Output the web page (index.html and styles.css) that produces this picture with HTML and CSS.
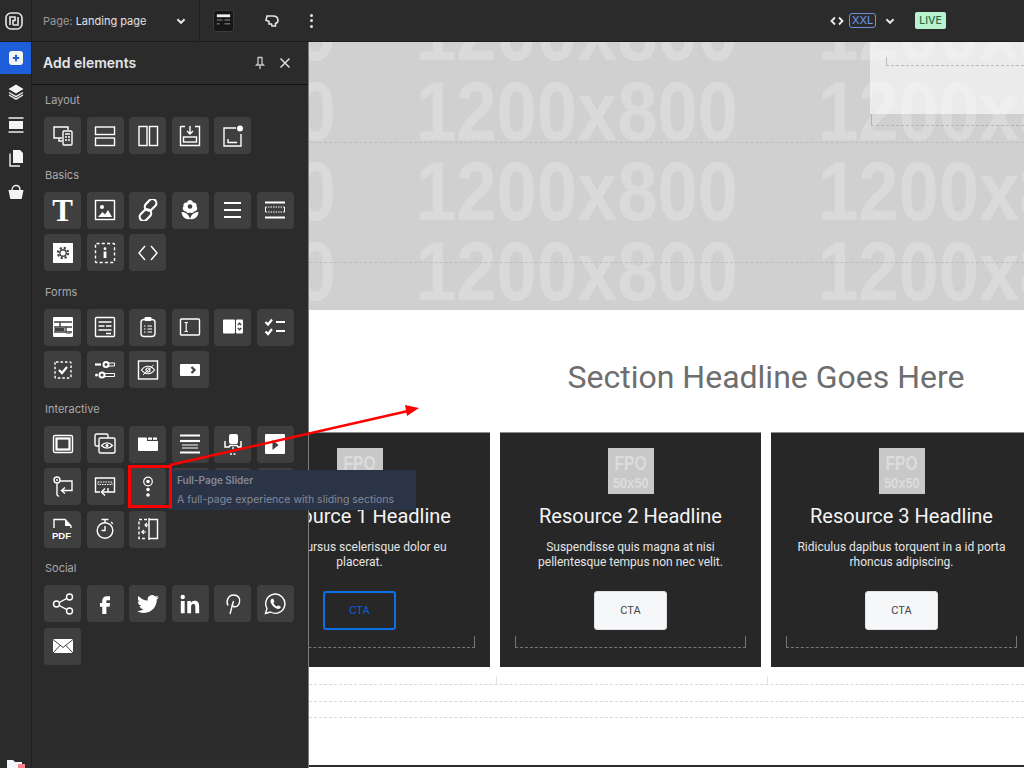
FILE: index.html
```html
<!DOCTYPE html>
<html lang="en">

<head>
    <meta charset="UTF-8">
    <meta name="viewport" content="width=device-width, initial-scale=1.0">
    <title>Add elements</title>
    <link rel="stylesheet" href="styles.css">
</head>

<body>
    <div class="app">
        <!-- top bar -->
        <header class="topbar">
            <div class="logoCell">
                <svg class="logo" viewBox="0 0 20 20">
                    <rect x="2" y="2" width="16" height="16" rx="5" />
                    <path d="M6 14V6h5v3.500H9V14M14 6v8H9" />
                </svg>
            </div>
            <div class="pageCell">
                <span class="pageName"><em>Page:</em> Landing page</span>
                <svg class="chev" viewBox="0 0 10 10"><path d="M2 3.500l3 3 3-3" /></svg>
            </div>
            <div class="tools">
                <div class="layoutBtn">
                    <svg viewBox="0 0 20 20">
                        <rect class="w" x="3" y="3" width="14" height="3" />
                        <path d="M3 9h6M11 9h6M3 13h3M11 13h6" />
                    </svg>
                </div>
                <svg class="toolIcon" viewBox="0 0 16 16">
                    <path d="M3 3h6c3 0 5 1.500 5 4.500 0 1.500-1 2.500-2.500 3V13H8l-.5-2H5V8.500L2 7.200z" />
                </svg>
                <div class="kebab"><i></i><i></i><i></i></div>
            </div>
            <div class="viewCtl">
                <svg class="codeIcon" viewBox="0 0 14 10"><path d="M5 1.500L1.500 5 5 8.500M9 1.500L12.500 5 9 8.500" /></svg>
                <span class="xxl">XXL</span>
                <svg class="chev" viewBox="0 0 10 10"><path d="M2 3.500l3 3 3-3" /></svg>
                <span class="live">LIVE</span>
            </div>
        </header>

        <div class="main">
            <!-- left rail -->
            <nav class="rail">
                <div class="railItem on">
                    <svg viewBox="0 0 18 18"><rect class="f" x="2" y="2" width="14" height="14" rx="3" /><path class="d" d="M9 5.800v6.400M5.800 9h6.400" /></svg>
                </div>
                <div class="railItem">
                    <svg viewBox="0 0 18 18"><path class="f" d="M9 1.500l7.500 4.500L9 10.500 1.500 6z" /><path d="M2 9.500l7 4.200 7-4.200" /><path d="M2 12l7 4.200 7-4.200" /></svg>
                </div>
                <div class="railItem">
                    <svg viewBox="0 0 18 18"><rect class="f" x="2" y="5" width="14" height="8" /><path d="M1.500 2h15M1.500 16h15" /></svg>
                </div>
                <div class="railItem">
                    <svg viewBox="0 0 18 18"><path class="f" d="M6 1h7l3 3v10H6z" /><path d="M3 4.500V17h10" /></svg>
                </div>
                <div class="railItem">
                    <svg viewBox="0 0 18 18"><path class="f" d="M1.500 7h15l-1.800 9H3.300z" /><path d="M5 7c0-6 8-6 8 0" /></svg>
                </div>
                <div class="railFoot">
                    <svg viewBox="0 0 20 12"><path class="f" d="M1 0h6l2 2h7v12H1z" /><rect class="pink" x="12" y="4" width="7" height="8" /></svg>
                </div>
            </nav>

            <!-- elements panel -->
            <aside class="panel">
                <div class="panelHead">
                    <h2>Add elements</h2>
                    <svg class="pin" viewBox="0 0 14 14"><path d="M4.500 1.500h5M5 1.500v6L3.500 9h7L9 7.500v-6M7 9v4" /></svg>
                    <svg class="close" viewBox="0 0 14 14"><path d="M2.500 2.500l9 9M11.500 2.500l-9 9" /></svg>
                </div>

                <section class="group">
                    <h3>Layout</h3>
                    <div class="tiles">
                        <div class="tile"><svg class="ic" viewBox="0 0 22 22"><path d="M10 13H2V2h14v3" /><path d="M7 13v3h3" /><rect x="11" y="6" width="9" height="14" rx="1" /><path d="M13 9h5M13 12h2M16 12h2M13 15h2M16 15h2" /></svg></div>
                        <div class="tile"><svg class="ic" viewBox="0 0 22 22"><rect x="1.500" y="2" width="19" height="7.500" /><rect x="1.500" y="13" width="19" height="7.500" /></svg></div>
                        <div class="tile"><svg class="ic" viewBox="0 0 22 22"><rect x="2" y="1.500" width="8" height="19" /><rect x="12.500" y="1.500" width="8" height="19" /></svg></div>
                        <div class="tile"><svg class="ic" viewBox="0 0 22 22"><path d="M6 1.500H2a.5.5 0 0 0-.5.5v18.500h19V1.500H16" /><path d="M11 1v7M8 6l3 3 3-3" /><rect x="4.500" y="12" width="13" height="5" /></svg></div>
                        <div class="tile"><svg class="ic" viewBox="0 0 22 22"><path d="M14 3H2v18h17V9" /><path d="M6 14v3.500h9" /><circle class="f" cx="18" cy="3.500" r="3" /></svg></div>
                    </div>
                </section>

                <section class="group">
                    <h3>Basics</h3>
                    <div class="tiles">
                        <div class="tile"><span class="serifT">T</span></div>
                        <div class="tile"><svg class="ic" viewBox="0 0 22 22"><rect x="1.500" y="1.500" width="19" height="19" /><circle class="f" cx="8" cy="8" r="2" /><path class="f" d="M4 18l4.500-5 2.500 2.500 3-4.500 4 7z" /></svg></div>
                        <div class="tile"><svg class="ic thick" viewBox="0 0 22 22"><rect x="11" y="-2" width="8" height="13" rx="4" transform="rotate(45 15 4.500) translate(0 2)" /><rect x="3" y="11" width="8" height="13" rx="4" transform="rotate(45 7 17.500) translate(0 -2)" /></svg></div>
                        <div class="tile"><svg class="ic" viewBox="0 0 22 22"><path class="f" d="M11 1a3 3 0 0 1 3 2.500 3 3 0 0 1 3.500 4A3 3 0 0 1 15 12.500a3 3 0 0 1-4 1 3 3 0 0 1-4-1 3 3 0 0 1-2.500-5A3 3 0 0 1 8 3.500 3 3 0 0 1 11 1z" /><circle class="n" cx="11" cy="7.500" r="2.300" /><path class="f" d="M2.500 13c4 0 7.500 2.500 8.500 7-4.500 1-8-2-8.500-7zM19.500 13c-4 0-7.500 2.500-8.500 7 4.500 1 8-2 8.500-7z" /></svg></div>
                        <div class="tile"><svg class="ic bold" viewBox="0 0 22 22"><path d="M2 4h17M2 11h17M2 18h17" /></svg></div>
                        <div class="tile"><svg class="ic" viewBox="0 0 22 22"><path class="bar" d="M1 3.500h20M1 18.500h20" /><path stroke-dasharray="1.500 1" d="M1.500 8h19M1.500 13h19" stroke-width="1" /><path d="M1.500 8v5M20.500 8v5" stroke-width="1" /></svg></div>
                        <div class="tile"><svg class="ic" viewBox="0 0 22 22"><rect class="f" x="1" y="1" width="20" height="20" /><circle class="dk" cx="11" cy="11" r="3.200" /><circle class="dkd" cx="11" cy="11" r="5.200" /></svg></div>
                        <div class="tile"><svg class="ic" viewBox="0 0 22 22"><rect x="1.500" y="1.500" width="19" height="19" rx="1" stroke-dasharray="3 2.300" /><circle class="f" cx="11" cy="6.700" r="1.400" /><rect class="f" x="9.600" y="9.500" width="2.800" height="6.500" /></svg></div>
                        <div class="tile"><svg class="ic" viewBox="0 0 22 22"><path d="M8 4l-6 7 6 7M14 4l6 7-6 7" /></svg></div>
                    </div>
                </section>

                <section class="group">
                    <h3>Forms</h3>
                    <div class="tiles">
                        <div class="tile"><svg class="ic" viewBox="0 0 22 22"><rect class="f" x="1" y="1" width="20" height="20" rx="1" /><path class="dk" d="M2 6h18M2 11h18M2 16h18M8 6v5M14 11v5" /><rect class="n" x="2.500" y="12" width="10" height="3" /><rect class="n" x="14" y="17.200" width="5" height=".5" /></svg></div>
                        <div class="tile"><svg class="ic" viewBox="0 0 22 22"><rect x="1.500" y="1.500" width="19" height="19" rx="1" /><path d="M4.500 6h13M4.500 10h6M12 10h5.500M4.500 14h13M12 17.500h5" /></svg></div>
                        <div class="tile"><svg class="ic" viewBox="0 0 22 22"><rect x="4" y="3.500" width="14" height="17" rx="3" /><rect class="f" x="7.500" y="1" width="7" height="4" rx="1" /><path d="M7 10h1.500M10.500 10H15M7 13h1.500M10.500 13H15M7 16h1.500M10.500 16H15" stroke-width="1.200" /></svg></div>
                        <div class="tile"><svg class="ic" viewBox="0 0 22 22"><rect x="1.500" y="3" width="19" height="16" rx="1" /><path d="M5.500 6.500h3.500M5.500 15.500h3.500M7.200 6.500v9" stroke-width="1.200" /></svg></div>
                        <div class="tile"><svg class="ic" viewBox="0 0 22 22"><rect class="f" x="1" y="3.500" width="12" height="14" rx="1" /><rect class="f" x="14" y="3.500" width="7" height="14" rx="1" /><path class="dk" d="M15.800 9l1.700-1.800L19.200 9M15.800 12l1.700 1.800 1.700-1.800" /></svg></div>
                        <div class="tile"><svg class="ic bold" viewBox="0 0 22 22"><path d="M1.500 6l2.500 2.500L8 3.500M1.500 15.500l2.500 2.500 4-5M12 6h9M12 15h9" /></svg></div>
                        <div class="tile"><svg class="ic" viewBox="0 0 22 22"><rect x="3" y="3" width="16" height="16" rx="1" stroke-dasharray="2.500 2" /><path class="th" d="M7 11l3 3 5-6" /></svg></div>
                        <div class="tile"><svg class="ic" viewBox="0 0 22 22"><path class="th" d="M1 5.500h6" /><circle cx="12" cy="5.500" r="2.500" stroke-width="2" /><path d="M15 4h5.500v3H15" stroke-width="1" /><circle class="f" cx="2.500" cy="16" r="1.500" /><circle cx="8" cy="16" r="2.500" stroke-width="2" /><path d="M11 14.500h9.500v3H11" stroke-width="1" /></svg></div>
                        <div class="tile"><svg class="ic" viewBox="0 0 22 22"><rect x="1.500" y="2" width="19" height="18" /><path d="M4.500 11c3.500-5 9.500-5 13 0-3.500 5-9.500 5-13 0z" stroke-width="1.200" /><circle cx="11" cy="11" r="2" stroke-width="1.200" /><path d="M6 16L16.500 6" stroke-width="1" /></svg></div>
                        <div class="tile"><svg class="ic" viewBox="0 0 22 22"><rect class="f" x="1" y="5" width="20" height="12" rx="1" /><path class="dk th" d="M12.500 8l3 3-3 3" /></svg></div>
                    </div>
                </section>

                <section class="group">
                    <h3>Interactive</h3>
                    <div class="tiles">
                        <div class="tile"><svg class="ic" viewBox="0 0 22 22"><rect x="1.500" y="2.500" width="19" height="17" rx="1.500" /><rect class="f2" x="4.500" y="5.500" width="13" height="11" /></svg></div>
                        <div class="tile"><svg class="ic" viewBox="0 0 22 22"><rect x="1" y="1" width="13" height="12" rx="1.500" /><rect class="n2" x="5" y="5" width="16" height="15" rx="1.500" /><path d="M7.500 12.500c3-3.500 8-3.500 11 0-3 3.500-8 3.500-11 0z" stroke-width="1.200" /><circle class="f" cx="13" cy="12.500" r="1.500" /></svg></div>
                        <div class="tile"><svg class="ic" viewBox="0 0 22 22"><path class="f" d="M1 5h9V8h11v9a1 1 0 0 1-1 1H2a1 1 0 0 1-1-1z" /><rect class="f" x="11" y="4.500" width="4" height="2.300" /><rect class="f" x="16" y="4.500" width="4" height="2.300" /><rect class="f" x="1" y="4.500" width="8.500" height="4" /></svg></div>
                        <div class="tile"><svg class="ic" viewBox="0 0 22 22"><path class="bar" d="M1 2.500h20M1 19.500h20" /><path class="bar" d="M1 8h20" /><path d="M3 12h16M3 15h16" stroke-width="1" /></svg></div>
                        <div class="tile"><svg class="ic" viewBox="0 0 22 22"><rect class="f" x="7" y="1" width="9" height="10" rx="2" /><path d="M3 8v6h4l1-1.500h7l1 1.500h3V8" stroke-width="1.500" /><path d="M11 14v5M8 21h6" stroke-dasharray="2 1.500" /></svg></div>
                        <div class="tile"><svg class="ic" viewBox="0 0 22 22"><rect class="f" x="1" y="1" width="20" height="20" rx="1" /><path class="n" d="M8.500 7l6 5-6 5z" /></svg></div>
                        <div class="tile"><svg class="ic" viewBox="0 0 22 22"><circle cx="5" cy="4" r="3" /><circle class="f" cx="5" cy="4" r="1" /><path d="M8 5h12v9.500H10" /><path d="M13 11.500l-3.500 3 3.500 3" /><path d="M5 7.500V19l2 1.500" /></svg></div>
                        <div class="tile"><svg class="ic" viewBox="0 0 22 22"><path d="M6 16H1.500V2h19v14H14" /><path d="M4 6h14v2.500H4z" stroke-dasharray="1.500 1" stroke-width="1" /><path d="M14 12v4H8" /><path d="M11 12.500L7.500 16l3.500 3.500" /></svg></div>
                        <div class="tile"><svg class="ic" viewBox="0 0 22 22"><circle cx="11" cy="5.500" r="4.300" stroke-width="1.200" /><circle class="f" cx="11" cy="5.500" r="1.800" /><circle class="f" cx="11" cy="13.500" r="1.800" /><circle class="f" cx="11" cy="19" r="1.800" /></svg></div>
                        <div class="tile"></div>
                        <div class="tile"></div>
                        <div class="tile"></div>
                        <div class="tile"><svg class="ic" viewBox="0 0 22 22"><path d="M2 10V1.500h11l6 6.500v2" /><path class="f" d="M13 2l6 6h-6z" /><text class="pdf" x="0" y="20.500">PDF</text></svg></div>
                        <div class="tile"><svg class="ic" viewBox="0 0 22 22"><circle cx="11" cy="12.500" r="7.800" /><path d="M7.500 1.500h7M11 1.500v3M17 4l1.800 1.800" /><path d="M11 8v4.500H7.500" /></svg></div>
                        <div class="tile"><svg class="ic" viewBox="0 0 22 22"><path d="M10 1.500H2v19h8" stroke-dasharray="3 2" /><path d="M12 1.500h8.500v19H12zM12 0v22" /><path d="M12 7H8M10 5l-2 2 2 2M4 14h5M7 12l-2 2 2 2" stroke-width="1.200" /></svg></div>
                    </div>
                </section>

                <section class="group">
                    <h3>Social</h3>
                    <div class="tiles">
                        <div class="tile"><svg class="ic" viewBox="0 0 22 22"><circle cx="4.500" cy="11" r="3" /><circle cx="17.500" cy="4" r="3" /><circle cx="17.500" cy="18" r="3" /><path d="M7.200 9.500l7.700-4.200M7.200 12.500l7.700 4.200" /></svg></div>
                        <div class="tile"><svg class="ic" viewBox="0 0 24 24"><path class="f" d="M14 8h3.500V3.500H14c-3 0-5 2-5 4.800V11H6.500v4H9v8h4.500v-8H17l.5-4h-4V8.800c0-.5.100-.8.500-.8z" /></svg></div>
                        <div class="tile"><svg class="ic" viewBox="0 0 24 24"><path class="f" d="M23.950 4.570a10 10 0 0 1-2.820.77 4.960 4.960 0 0 0 2.160-2.720c-.95.550-2 .960-3.120 1.190a4.920 4.920 0 0 0-8.390 4.480C7.690 8.090 4.070 6.130 1.640 3.160a4.820 4.820 0 0 0-.67 2.480c0 1.710.87 3.210 2.190 4.100a4.900 4.900 0 0 1-2.230-.61v.06c0 2.390 1.700 4.380 3.950 4.830a5 5 0 0 1-2.210.08 4.940 4.940 0 0 0 4.600 3.420A9.870 9.870 0 0 1 0 19.540a14 14 0 0 0 7.560 2.210c9.050 0 14-7.500 14-13.980 0-.210 0-.420-.020-.630a9.940 9.940 0 0 0 2.460-2.550z" /></svg></div>
                        <div class="tile"><svg class="ic" viewBox="0 0 24 24"><path class="f" d="M22 22h-4.200v-6.500c0-1.600 0-3.500-2.100-3.500s-2.500 1.600-2.500 3.400V22H9V8.800h4v1.800h.1c.6-1.100 1.900-2.100 3.900-2.100 4.200 0 5 2.700 5 6.300zM4.100 6.800a2.400 2.400 0 1 1 0-4.800 2.400 2.400 0 0 1 0 4.800zM6.200 22H2V8.800h4.200z" /></svg></div>
                        <div class="tile"><svg class="ic" viewBox="0 0 22 22"><path d="M8 21l3.500-13" /><path d="M6 12.500C3.500 8 6.500 2 11.500 2c4.500 0 7 3 6 7.500-.8 3.500-3.500 5-6 4-1-.4-1.500-1-1.800-1.800" /></svg></div>
                        <div class="tile"><svg class="ic" viewBox="0 0 22 22"><path d="M1.500 20.500l1.500-5A9.600 9.600 0 1 1 6.500 19z" /><path class="f" d="M7.800 5.800c-1.500 1-1.800 3-.5 5 1.300 2.300 3.500 4.300 5.800 5 1.800.5 3.300-.3 3.800-1.800l-2.700-1.800-1.300 1.200c-1.500-.6-3-2.200-3.500-3.500l1-1.300-1.200-2.800z" /></svg></div>
                        <div class="tile"><svg class="ic" viewBox="0 0 22 22"><rect class="f" x="1" y="4" width="20" height="14" rx="1" /><path class="dk mail" d="M1 4.500l10 8 10-8M1 18l7.500-8M21 18l-7.500-8" /></svg></div>
                    </div>
                </section>
            </aside>

            <!-- page canvas -->
            <main class="stage">
                <div class="hero">
                    <svg class="heroArt" viewBox="0 0 715 268">
                        <g class="heroRow">
                            <text x="-295" y="18" textLength="322" lengthAdjust="spacingAndGlyphs">1200x800</text>
                            <text x="107" y="18" textLength="322" lengthAdjust="spacingAndGlyphs">1200x800</text>
                            <text x="509" y="18" textLength="322" lengthAdjust="spacingAndGlyphs">1200x800</text>
                            <text x="-295" y="98" textLength="322" lengthAdjust="spacingAndGlyphs">1200x800</text>
                            <text x="107" y="98" textLength="322" lengthAdjust="spacingAndGlyphs">1200x800</text>
                            <text x="509" y="98" textLength="322" lengthAdjust="spacingAndGlyphs">1200x800</text>
                            <text x="-295" y="178" textLength="322" lengthAdjust="spacingAndGlyphs">1200x800</text>
                            <text x="107" y="178" textLength="322" lengthAdjust="spacingAndGlyphs">1200x800</text>
                            <text x="509" y="178" textLength="322" lengthAdjust="spacingAndGlyphs">1200x800</text>
                            <text x="-295" y="258" textLength="322" lengthAdjust="spacingAndGlyphs">1200x800</text>
                            <text x="107" y="258" textLength="322" lengthAdjust="spacingAndGlyphs">1200x800</text>
                            <text x="509" y="258" textLength="322" lengthAdjust="spacingAndGlyphs">1200x800</text>
                        </g>
                    </svg>
                    <i class="heroDash first"></i>
                    <i class="heroDash second"></i>
                    <div class="ghostBox"><i class="ghostLine"></i></div>
                    <i class="ghostFoot"></i>
                </div>

                <div class="pageWrap">
                    <h1>Section Headline Goes Here</h1>
                    <div class="cards">
                        <article class="card">
                            <div class="fpo"><b>FPO</b><b class="small">50x50</b></div>
                            <h4>Resource 1 Headline</h4>
                            <p>Ante cursus scelerisque dolor eu placerat.</p>
                            <a href="#" class="cta active">CTA</a>
                            <i class="bracket"></i>
                        </article>
                        <article class="card">
                            <div class="fpo"><b>FPO</b><b class="small">50x50</b></div>
                            <h4>Resource 2 Headline</h4>
                            <p>Suspendisse quis magna at nisi pellentesque tempus non nec velit.</p>
                            <a href="#" class="cta">CTA</a>
                            <i class="bracket"></i>
                        </article>
                        <article class="card">
                            <div class="fpo"><b>FPO</b><b class="small">50x50</b></div>
                            <h4>Resource 3 Headline</h4>
                            <p>Ridiculus dapibus torquent in a id porta rhoncus adipiscing.</p>
                            <a href="#" class="cta">CTA</a>
                            <i class="bracket"></i>
                        </article>
                    </div>
                </div>

                <div class="guides">
                    <div class="guideTicks"><i></i><i></i></div>
                    <div class="guide"></div>
                    <div class="guide"></div>
                    <div class="guide"></div>
                </div>
            </main>
        </div>

        <!-- tooltip + red annotation, over everything -->
        <div class="tooltip">
            <strong>Full-Page Slider</strong>
            <span>A full-page experience with sliding sections</span>
        </div>
        <svg class="annot" viewBox="0 0 1024 768">
            <rect x="129.500" y="466.500" width="41" height="40" />
            <path d="M170 465L408 411" />
            <path class="head" d="M419 408L405 405 407 416z" />
        </svg>
    </div>
</body>

</html>
```

FILE: styles.css
```css
/* reset */
* {
    margin: 0;
    box-sizing: border-box;
}

body {
    background: #fff;
    font-family: "Inter", "Liberation Sans", sans-serif;
    color: #ddd;
    overflow: hidden;
}

i {
    display: block;
}

.app {
    position: relative;
    display: flex;
    flex-direction: column;
    width: 1024px;
    height: 768px;
    overflow: hidden;
}

/* top bar */
.topbar {
    display: flex;
    align-items: center;
    flex: 0 0 42px;
    background: #2b2b2b;
    border-bottom: 1px solid #1c1c1c;
}

.logoCell {
    display: flex;
    align-items: center;
    justify-content: center;
    width: 32px;
    height: 41px;
    border-right: 1px solid #1f1f1f;
}

.logo {
    width: 20px;
    height: 20px;
    margin-left: -3px;
    fill: none;
    stroke: #e6e6e6;
    stroke-width: 1.6;
}

.pageCell {
    display: flex;
    align-items: center;
    width: 168px;
    height: 41px;
    padding: 0 12px 0 11px;
    border-right: 1px solid #1f1f1f;
}

.pageName {
    flex: 1;
    font-size: 11px;
    color: #e2e2e2;
}

.pageName em {
    font-style: normal;
    color: #9a9a9a;
}

.chev {
    width: 12px;
    height: 12px;
    fill: none;
    stroke: #e6e6e6;
    stroke-width: 1.6;
}

.tools {
    display: flex;
    align-items: center;
    padding-left: 13px;
}

.layoutBtn {
    width: 21px;
    height: 22px;
    background: #161616;
    border: 1px solid #3a3a3a;
    border-radius: 3px;
}

.layoutBtn svg {
    display: block;
    width: 19px;
    height: 20px;
    fill: none;
    stroke: #666;
    stroke-width: 1.600;
}

.layoutBtn .w {
    fill: #eee;
    stroke: none;
}

.toolIcon {
    width: 16px;
    height: 16px;
    margin-left: 30px;
    fill: none;
    stroke: #e6e6e6;
    stroke-width: 1.600;
}

.kebab {
    display: flex;
    flex-direction: column;
    gap: 2.500px;
    margin-left: 30px;
}

.kebab i {
    width: 3px;
    height: 3px;
    border-radius: 50%;
    background: #e6e6e6;
}

.viewCtl {
    display: flex;
    align-items: center;
    margin-left: auto;
    padding-right: 78px;
}

.codeIcon {
    width: 14px;
    height: 10px;
    fill: none;
    stroke: #eee;
    stroke-width: 1.800;
}

.xxl {
    width: 27px;
    height: 15px;
    margin-left: 5px;
    border: 1px solid #6d8fdc;
    border-radius: 3px;
    font-size: 11px;
    line-height: 13px;
    text-align: center;
    color: #6f97f0;
}

.viewCtl .chev {
    margin-left: 8px;
}

.live {
    width: 31px;
    height: 17px;
    margin-left: 19px;
    background: #b8f2cf;
    border-radius: 2px;
    font-size: 10.500px;
    font-weight: 500;
    line-height: 17px;
    text-align: center;
    color: #1f6b4b;
}

.main {
    display: flex;
    flex: 1;
    min-height: 0;
}

/* rail */
.rail {
    display: flex;
    flex-direction: column;
    flex: 0 0 32px;
    background: #2b2b2b;
    border-right: 1px solid #1f1f1f;
}

.railItem {
    display: flex;
    align-items: center;
    justify-content: center;
    height: 33.300px;
}

.railItem.on {
    height: 32px;
    margin-bottom: 1px;
    background: #1e5edb;
}

.railItem svg {
    width: 18px;
    height: 18px;
    fill: none;
    stroke: #eee;
    stroke-width: 1.400;
}

.railItem .f {
    fill: #f4f4f4;
    stroke: none;
}

.railItem .d {
    stroke: #1e5edb;
    stroke-width: 2;
}

.railFoot {
    margin-top: auto;
    height: 8px;
    overflow: hidden;
    padding-left: 6px;
}

.railFoot svg {
    display: block;
    width: 20px;
    height: 12px;
}

.railFoot .f {
    fill: #f3f6fb;
}

.railFoot .pink {
    fill: #ff8088;
}

/* panel */
.panel {
    flex: 0 0 277px;
    background: #2b2b2b;
    border-right: 1px solid #7d7d7d;
}

.panelHead {
    display: flex;
    align-items: center;
    height: 43px;
    padding: 0 16px 1px 11px;
    border-bottom: 1px solid #141414;
}

.panelHead h2 {
    flex: 1;
    font-size: 14px;
    font-weight: 600;
    color: #e4e6ea;
}

.pin,
.close {
    width: 14px;
    height: 14px;
    fill: none;
    stroke: #c9c9c9;
    stroke-width: 1.300;
}

.close {
    margin-left: 11px;
    stroke: #ddd;
    stroke-width: 1.500;
}

.group {
    margin: 0 0 12.500px 12px;
}

.group:first-of-type {
    margin-top: 7px;
}

.group h3 {
    height: 16px;
    margin: 0 0 9px 1px;
    font-size: 11px;
    font-weight: 400;
    line-height: 16px;
    color: #a9a9a9;
}

.tiles {
    display: grid;
    grid-template-columns: repeat(6, 37px);
    grid-auto-rows: 37px;
    gap: 5.500px;
}

.tile {
    display: flex;
    align-items: center;
    justify-content: center;
    background: #3f3f3f;
    border-radius: 4px;
}

.serifT {
    font-family: "Liberation Serif", serif;
    font-size: 31px;
    font-weight: 700;
    line-height: 1;
    color: #fff;
}

/* tile icons */
.ic {
    width: 22px;
    height: 22px;
    fill: none;
    stroke: #fff;
    stroke-width: 1.400;
}

.ic.thick {
    stroke-width: 2.200;
}

.ic.bold {
    stroke-width: 2.200;
}

.ic .f {
    fill: #fff;
    stroke: none;
}

.ic .f2 {
    fill: #3f3f3f;
    stroke-width: 2.200;
}

.ic .n {
    fill: #3f3f3f;
    stroke: none;
}

.ic .n2 {
    fill: #3f3f3f;
}

.ic .dk {
    fill: none;
    stroke: #3f3f3f;
    stroke-width: 1.400;
}

.ic .dkd {
    fill: none;
    stroke: #3f3f3f;
    stroke-width: 2;
    stroke-dasharray: 2.200 1.900;
}

.ic .bar {
    stroke-width: 2.200;
}

.ic .th {
    stroke-width: 2.200;
}

.ic .mail {
    stroke-width: 1;
}

.ic .pdf {
    fill: #fff;
    stroke: none;
    font-family: "Liberation Sans", sans-serif;
    font-size: 9.500px;
    font-weight: 700;
}

/* canvas */
.stage {
    flex: 1;
    min-width: 0;
    height: 725px;
    overflow: hidden;
    background: #fff;
    border-bottom: 2px solid #2b2b2b;
}

.hero {
    position: relative;
    height: 268px;
    background: #d0d0d0;
    overflow: hidden;
}

.heroArt {
    display: block;
    width: 715px;
    height: 268px;
}

.heroRow text {
    font-family: "Liberation Sans", sans-serif;
    font-size: 84px;
    font-weight: 700;
    fill: #dadada;
}

.heroDash {
    position: absolute;
    left: 0;
    right: 0;
    border-top: 1px dashed #bdbdbd;
}

.heroDash.first {
    top: 100px;
}

.heroDash.second {
    top: 220px;
}

.ghostBox {
    position: absolute;
    top: 0;
    right: 0;
    width: 154px;
    height: 72px;
    background: rgba(255, 255, 255, .58);
}

.ghostLine {
    position: absolute;
    top: 15px;
    left: 16px;
    right: 0;
    height: 9px;
    border-left: 1px solid #bbb;
    border-bottom: 1px dashed #bbb;
}

.ghostFoot {
    position: absolute;
    top: 72px;
    right: 0;
    width: 153px;
    height: 12px;
    border-left: 1px solid #b4b4b4;
    border-bottom: 1px dashed #b4b4b4;
}

.pageWrap {
    width: 1074px;
    margin-left: -80px;
}

.pageWrap h1 {
    margin-top: 48px;
    font-family: "Roboto", sans-serif;
    font-size: 32px;
    font-weight: 400;
    line-height: 38px;
    text-align: center;
    color: #6e6e6e;
}

.cards {
    display: grid;
    grid-template-columns: repeat(4, 261px);
    gap: 10px;
    margin-top: 36px;
}

.card {
    position: relative;
    height: 235px;
    padding-top: 15px;
    background: #272727;
    border-top: 1px solid #8d8d8d;
    font-family: "Roboto", sans-serif;
    text-align: center;
}

.fpo {
    display: flex;
    flex-direction: column;
    align-items: center;
    width: 46px;
    height: 46px;
    margin: 0 auto;
    background: #c8c8c8;
    font-family: "Liberation Sans", sans-serif;
    color: #dcdcdc;
}

.fpo b {
    font-size: 20px;
    line-height: 24px;
    margin-top: 3px;
    transform: scaleX(.78);
}

.fpo .small {
    font-size: 15px;
    line-height: 15px;
    margin-top: 0;
    transform: scaleX(.86);
}

.card h4 {
    margin-top: 10px;
    font-size: 20px;
    font-weight: 400;
    line-height: 24px;
    color: #f4f4f4;
}

.card p {
    height: 30px;
    margin: 12px auto 0;
    width: 215px;
    font-size: 12px;
    line-height: 15px;
    color: #e4e4e4;
}

.cta {
    display: block;
    width: 73px;
    height: 39px;
    margin: 21px auto 0;
    background: #f6f7f9;
    border: 1px solid #dfe1e5;
    border-radius: 3px;
    font-size: 11px;
    line-height: 37px;
    text-decoration: none;
    color: #444;
}

.cta.active {
    background: transparent;
    border: 2px solid #0b6fe6;
    line-height: 35px;
    color: #0d5fd6;
}

.bracket {
    width: 231px;
    height: 12px;
    margin: 6px auto 0;
    border: 1px solid #777;
    border-top: 0;
    border-bottom-style: dashed;
}

.guides {
    width: 100%;
}

.guideTicks {
    display: flex;
    gap: 270px;
    height: 8px;
    margin: 9px 0 0 187px;
}

.guideTicks i {
    width: 1px;
    height: 8px;
    background: #e2e2e2;
}

.guide {
    height: 16.500px;
    border-top: 1px dashed #d8d8d8;
}

/* tooltip */
.tooltip {
    position: absolute;
    left: 168px;
    top: 470px;
    display: flex;
    flex-direction: column;
    width: 248px;
    height: 40px;
    padding: 4px 0 0 9px;
    background: #2b3347;
    color: #858a96;
}

.tooltip strong {
    font-size: 10px;
    font-weight: 600;
    line-height: 13px;
}

.tooltip span {
    margin-top: 6px;
    font-size: 10.500px;
    line-height: 13px;
    white-space: nowrap;
}

/* annotation */
.annot {
    position: absolute;
    left: 0;
    top: 0;
    width: 1024px;
    height: 768px;
    fill: none;
    stroke: #f00;
    stroke-width: 2.500;
    pointer-events: none;
}

.annot rect {
    stroke-width: 3;
}

.annot .head {
    fill: #f00;
    stroke: none;
}
```
